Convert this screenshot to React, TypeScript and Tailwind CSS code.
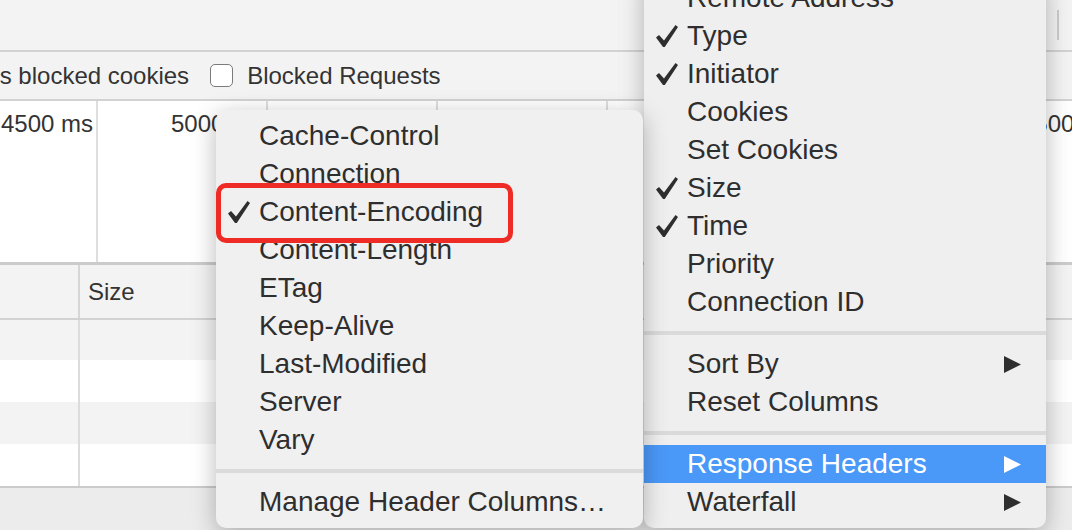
import React from 'react';

type Item =
  | { sep: true }
  | { sep?: false; label: string; checked?: boolean; arrow?: boolean; active?: boolean };

const rightItems: Item[] = [
  { label: 'Remote Address' },
  { label: 'Type', checked: true },
  { label: 'Initiator', checked: true },
  { label: 'Cookies' },
  { label: 'Set Cookies' },
  { label: 'Size', checked: true },
  { label: 'Time', checked: true },
  { label: 'Priority' },
  { label: 'Connection ID' },
  { sep: true },
  { label: 'Sort By', arrow: true },
  { label: 'Reset Columns' },
  { sep: true },
  { label: 'Response Headers', arrow: true, active: true },
  { label: 'Waterfall', arrow: true },
];

const headerItems: Item[] = [
  { label: 'Cache-Control' },
  { label: 'Connection' },
  { label: 'Content-Encoding', checked: true },
  { label: 'Content-Length' },
  { label: 'ETag' },
  { label: 'Keep-Alive' },
  { label: 'Last-Modified' },
  { label: 'Server' },
  { label: 'Vary' },
  { sep: true },
  { label: 'Manage Header Columns…' },
];

const ticks = ['4500 ms', '5000 ms', '5500 ms', '6000 ms', '6500 ms', '7000 ms', '7500 ms'];

function CheckIcon() {
  return (
    <svg width="22" height="22" viewBox="0 0 22 22">
      <path d="M0 12.5 L3 10 L8 15.5 L19.5 0 L22 2 L8.8 22 L7 22 Z" fill="currentColor" />
    </svg>
  );
}

function ArrowIcon() {
  return (
    <svg width="17" height="17" viewBox="0 0 17 17">
      <polygon points="0,0 17,8.5 0,17" fill="currentColor" />
    </svg>
  );
}

function MenuList({ items }: { items: Item[] }) {
  return (
    <>
      {items.map((it, i) =>
        it.sep ? (
          <div key={i} className="py-[10px]">
            <div className="h-[4px] bg-[#dadada]" />
          </div>
        ) : (
          <div
            key={i}
            className={`flex items-center h-[38px] pl-[12px] pr-[25px] ${
              it.active ? 'bg-[#4a98f8] text-white' : 'text-[#2e2e2e]'
            }`}
          >
            <span className="w-[31px] shrink-0 flex items-center">{it.checked && <CheckIcon />}</span>
            <span className="whitespace-nowrap leading-[38px]">{it.label}</span>
            {it.arrow && (
              <span className="ml-auto flex items-center">
                <ArrowIcon />
              </span>
            )}
          </div>
        )
      )}
    </>
  );
}

export default function App() {
  const rows = [
    { h: 'h-[40px]', bg: 'bg-[#f3f3f3]' },
    { h: 'h-[42px]', bg: 'bg-white' },
    { h: 'h-[42px]', bg: 'bg-[#f3f3f3]' },
    { h: 'h-[42px]', bg: 'bg-white' },
  ];

  return (
    <div
      className="relative w-[1072px] h-[530px] overflow-hidden bg-[#ececec] text-[#2e2e2e] flex flex-col"
      style={{ fontFamily: '"Liberation Sans", Arial, sans-serif' }}
    >
      {/* top toolbar */}
      <div className="h-[52px] shrink-0 bg-[#f3f3f3] border-b-2 border-[#d2d2d2] flex justify-end items-center pr-[13px]">
        <div className="w-[2px] h-[30px] bg-[#cbcbcb]" />
      </div>

      {/* filter row */}
      <div className="h-[49px] shrink-0 bg-[#f3f3f3] border-b-2 border-[#d2d2d2] flex items-center text-[24px] text-[#333]">
        <span className="ml-[-31px] whitespace-nowrap">Has blocked cookies</span>
        <span className="ml-[21px] w-[23px] h-[23px] rounded-[5px] border-[1.5px] border-[#7a7a7a] bg-white shrink-0" />
        <span className="ml-[14px] whitespace-nowrap">Blocked Requests</span>
      </div>

      {/* timeline overview */}
      <div className="h-[164px] shrink-0 bg-white border-b-[3px] border-[#cbcbcb] flex ml-[-72px] text-[24px] text-[#333]">
        {ticks.map((t) => (
          <div key={t} className="w-[170px] shrink-0 border-r-2 border-[#dedede] text-right pr-[3px] pt-[9px] leading-[28px] whitespace-nowrap">
            {t}
          </div>
        ))}
      </div>

      {/* table header */}
      <div className="h-[55px] shrink-0 bg-[#f3f3f3] border-b-2 border-[#d2d2d2] flex text-[24px] text-[#333]">
        <div className="w-[80px] shrink-0 border-r-2 border-[#d6d6d6]" />
        <div className="flex items-center pl-[8px]">Size</div>
      </div>

      {/* rows */}
      <div className="shrink-0 border-b-2 border-[#cbcbcb]">
        {rows.map((r, i) => (
          <div key={i} className={`flex ${r.h} ${r.bg}`}>
            <div className="w-[80px] shrink-0 border-r-2 border-[#dcdcdc]" />
          </div>
        ))}
      </div>

      <div className="flex-1 bg-[#ececec]" />

      {/* main context menu */}
      <div className="absolute left-[644px] top-[-28px] w-[402px] h-[556px] pt-[7px] bg-[#efefef] rounded-[10px] shadow-[0_6px_24px_rgba(0,0,0,0.28)] text-[28px]">
        <MenuList items={rightItems} />
      </div>

      {/* response headers submenu */}
      <div className="absolute left-[216px] top-[110px] w-[427px] h-[418px] pt-[7px] bg-[#f0f0f0] rounded-[10px] shadow-[0_6px_24px_rgba(0,0,0,0.28)] text-[28px]">
        <MenuList items={headerItems} />
      </div>

      {/* annotation box */}
      <div className="absolute left-[216px] top-[183px] w-[297px] h-[60px] border-[5px] border-[#ee2b24] rounded-[10px]" />
    </div>
  );
}
